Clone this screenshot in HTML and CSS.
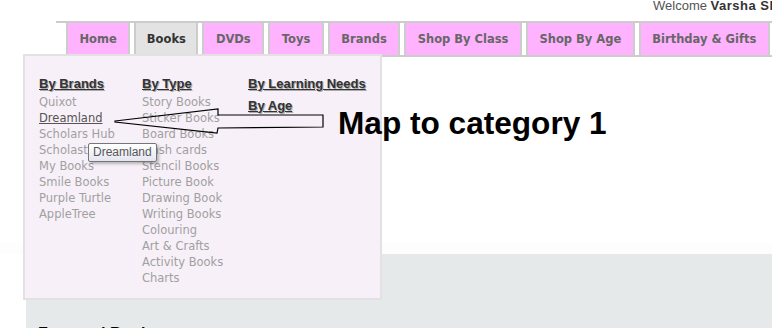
FILE: index.html
```
<!DOCTYPE html>
<html lang="en">
<head>
    <meta charset="UTF-8">
    <meta name="viewport" content="width=device-width, initial-scale=1.0">
    <title>Books menu - category mapping</title>
    <link rel="stylesheet" href="styles.css">
</head>
<body>
    <div class="page">
        <div class="welcome">Welcome <b>Varsha Sharma</b></div>

        <ul class="nav">
            <li><a href="#">Home</a></li>
            <li class="active">
                <a href="#">Books</a>
                <div class="dropdown">
                    <ul class="menu-col">
                        <li class="menu-head">By Brands</li>
                        <li>Quixot</li>
                        <li class="hover">Dreamland</li>
                        <li>Scholars Hub</li>
                        <li>Scholastic</li>
                        <li>My Books</li>
                        <li>Smile Books</li>
                        <li>Purple Turtle</li>
                        <li>AppleTree</li>
                    </ul>
                    <ul class="menu-col">
                        <li class="menu-head">By Type</li>
                        <li>Story Books</li>
                        <li>Sticker Books</li>
                        <li>Board Books</li>
                        <li>Flash cards</li>
                        <li>Stencil Books</li>
                        <li>Picture Book</li>
                        <li>Drawing Book</li>
                        <li>Writing Books</li>
                        <li>Colouring</li>
                        <li>Art &amp; Crafts</li>
                        <li>Activity Books</li>
                        <li>Charts</li>
                    </ul>
                    <ul class="menu-col">
                        <li class="menu-head">By Learning Needs</li>
                        <li class="menu-head">By Age</li>
                    </ul>
                </div>
            </li>
            <li><a href="#">DVDs</a></li>
            <li><a href="#">Toys</a></li>
            <li><a href="#">Brands</a></li>
            <li><a href="#">Shop By Class</a></li>
            <li><a href="#">Shop By Age</a></li>
            <li><a href="#">Birthday &amp; Gifts</a></li>
            <li><a href="#">Offers</a></li>
        </ul>

        <div class="banner"></div>

        <div class="section">
            <h2 class="section-title">Featured Books</h2>
        </div>

        <!-- browser tooltip for the hovered link -->
        <div class="tooltip">Dreamland</div>

        <!-- annotation drawn over the screenshot -->
        <svg class="callout-arrow" width="772" height="328" viewBox="0 0 772 328">
            <polygon points="115,121 218,109 218,115 323,115 323,127 218,128 217,133 115,122"
                     fill="none" stroke="#000" stroke-width="1.2" stroke-linejoin="miter"/>
        </svg>
        <div class="callout-text">Map to category 1</div>
    </div>
</body>
</html>
```

FILE: styles.css
```
html, body {
    margin: 0;
    padding: 0;
    overflow: hidden;
    background: #fff;
}
.page {
    position: relative;
    width: 1000px;
    font-family: "DejaVu Sans", Verdana, sans-serif;
}
.welcome {
    height: 21px;
    margin-left: 653px;
    font-family: "Liberation Sans", Arial, sans-serif;
    font-size: 13px;
    line-height: 12px;
    color: #555;
    white-space: nowrap;
}
.welcome b {
    color: #333;
    letter-spacing: 0.5px;
}

/* top navigation */
.nav {
    position: relative;
    display: flex;
    list-style: none;
    margin: 0 0 0 56px;
    padding: 0 0 0 10px;
    border-top: 2px solid #ccc;
    border-bottom: 2px solid #ccc;
}
.nav > li {
    background: #ffb3ff;
    border-left: 2px solid #ccc;
    border-right: 2px solid #ccc;
    margin-right: 4px;
}
.nav > li > a {
    display: block;
    height: 32px;
    line-height: 32px;
    padding: 0 11.5px;
    font-size: 11.5px;
    font-weight: bold;
    color: #666;
    text-decoration: none;
    white-space: nowrap;
}
.nav > li.active {
    background: #e3e3e3;
}
.nav > li.active > a {
    padding: 0 10.5px;
    color: #333;
}

/* books dropdown */
.dropdown {
    position: absolute;
    left: -33px;
    top: 31px;
    width: 359px;
    box-sizing: border-box;
    display: grid;
    grid-template-columns: 103px 106px auto;
    padding: 20px 0 12.5px 14px;
    background: #f8f0f8;
    border: 2px solid #e4e0e4;
    z-index: 2;
}
.menu-col {
    list-style: none;
    margin: 0;
    padding: 0;
}
.menu-col li {
    font-size: 11.5px;
    line-height: 16px;
    color: #a0a0a0;
    white-space: nowrap;
}
.menu-col li.hover {
    color: #555;
    text-decoration: underline;
}
.menu-col .menu-head {
    padding-bottom: 2px;
    margin-bottom: -0.5px;
    font-family: "Liberation Sans", Arial, sans-serif;
    font-size: 13px;
    font-weight: bold;
    color: #333;
    text-decoration: underline;
    text-shadow: 1px 1px 0 #aaa;
}
.menu-col .menu-head + .menu-head {
    margin-top: 4px;
}

.banner {
    height: 197px;
    background: linear-gradient(#fff 186px, #fdfdfd 186px);
}
.section {
    margin-left: 26px;
    padding: 70px 12px 20px;
    background: #e6e9ea;
}
.section-title {
    margin: 0;
    font-family: "Liberation Sans", Arial, sans-serif;
    font-size: 16px;
    line-height: 20px;
    color: #000;
}

.tooltip {
    position: absolute;
    left: 88px;
    top: 143px;
    padding: 1px 4px;
    font-family: "Liberation Sans", Arial, sans-serif;
    font-size: 12px;
    line-height: 15px;
    color: #575757;
    background: linear-gradient(#fff, #e4e5f0);
    border: 1px solid #767676;
    border-radius: 2px;
    box-shadow: 2px 2px 3px rgba(0,0,0,0.25);
    z-index: 3;
}

.callout-arrow {
    position: absolute;
    left: 0;
    top: 0;
    z-index: 4;
    pointer-events: none;
}
.callout-text {
    position: absolute;
    left: 338px;
    top: 108px;
    font-family: "Liberation Sans", Arial, sans-serif;
    font-size: 31.6px;
    line-height: 31px;
    font-weight: bold;
    color: #000;
    white-space: nowrap;
    z-index: 4;
}
```
